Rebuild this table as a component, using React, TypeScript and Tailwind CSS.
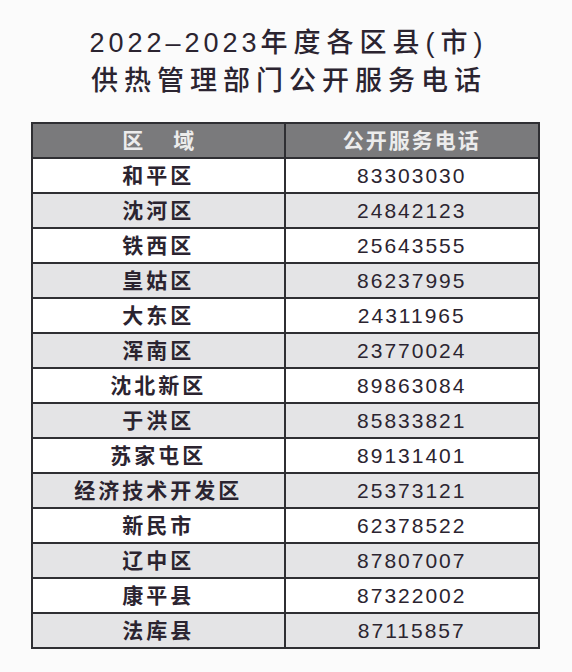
const rows: [string, string][] = [
  ["和平区", "83303030"],
  ["沈河区", "24842123"],
  ["铁西区", "25643555"],
  ["皇姑区", "86237995"],
  ["大东区", "24311965"],
  ["浑南区", "23770024"],
  ["沈北新区", "89863084"],
  ["于洪区", "85833821"],
  ["苏家屯区", "89131401"],
  ["经济技术开发区", "25373121"],
  ["新民市", "62378522"],
  ["辽中区", "87807007"],
  ["康平县", "87322002"],
  ["法库县", "87115857"],
]

const font = "font-['Liberation_Sans','Noto_Sans_CJK_SC',sans-serif]"

export default function App() {
  return (
    <div className={`w-[572px] h-[672px] bg-[#fbfbfb] ${font} text-[#2b2430]`}>
      {/* Title */}
      <div className="pt-[24px] pl-[6px] flex flex-col items-center font-medium">
        <h1 className="text-[27px] leading-[38px] tracking-[6px]">
          <span className="tracking-[4px]">2022–2023</span>年度各区县(市)
        </h1>
        <h1 className="text-[27px] leading-[38px] tracking-[6px]">供热管理部门公开服务电话</h1>
      </div>

      {/* Table */}
      <div className="mt-[22px] ml-[31px] w-[509px] border-2 border-[#2f2f33]">
        <div className="grid grid-cols-2 h-[33px] bg-[#7a7a7c] text-[#ececec] font-bold text-[21px]">
          <div className="flex items-center justify-center gap-[30px] border-r-2 border-[#2f2f33]">
            <span>区</span>
            <span>域</span>
          </div>
          <div className="flex items-center justify-center tracking-[2px]">公开服务电话</div>
        </div>
        {rows.map(([area, phone], i) => (
          <div
            key={area}
            className={`grid grid-cols-2 h-[35px] border-t-2 border-[#2f2f33] ${i % 2 === 1 ? "bg-[#e4e4e6]" : "bg-white"}`}
          >
            <div className="flex items-center justify-center border-r-2 border-[#2f2f33] text-[21px] font-bold tracking-[3px]">
              {area}
            </div>
            <div className="flex items-center justify-center text-[21px] tracking-[2px]">{phone}</div>
          </div>
        ))}
      </div>
    </div>
  )
}
